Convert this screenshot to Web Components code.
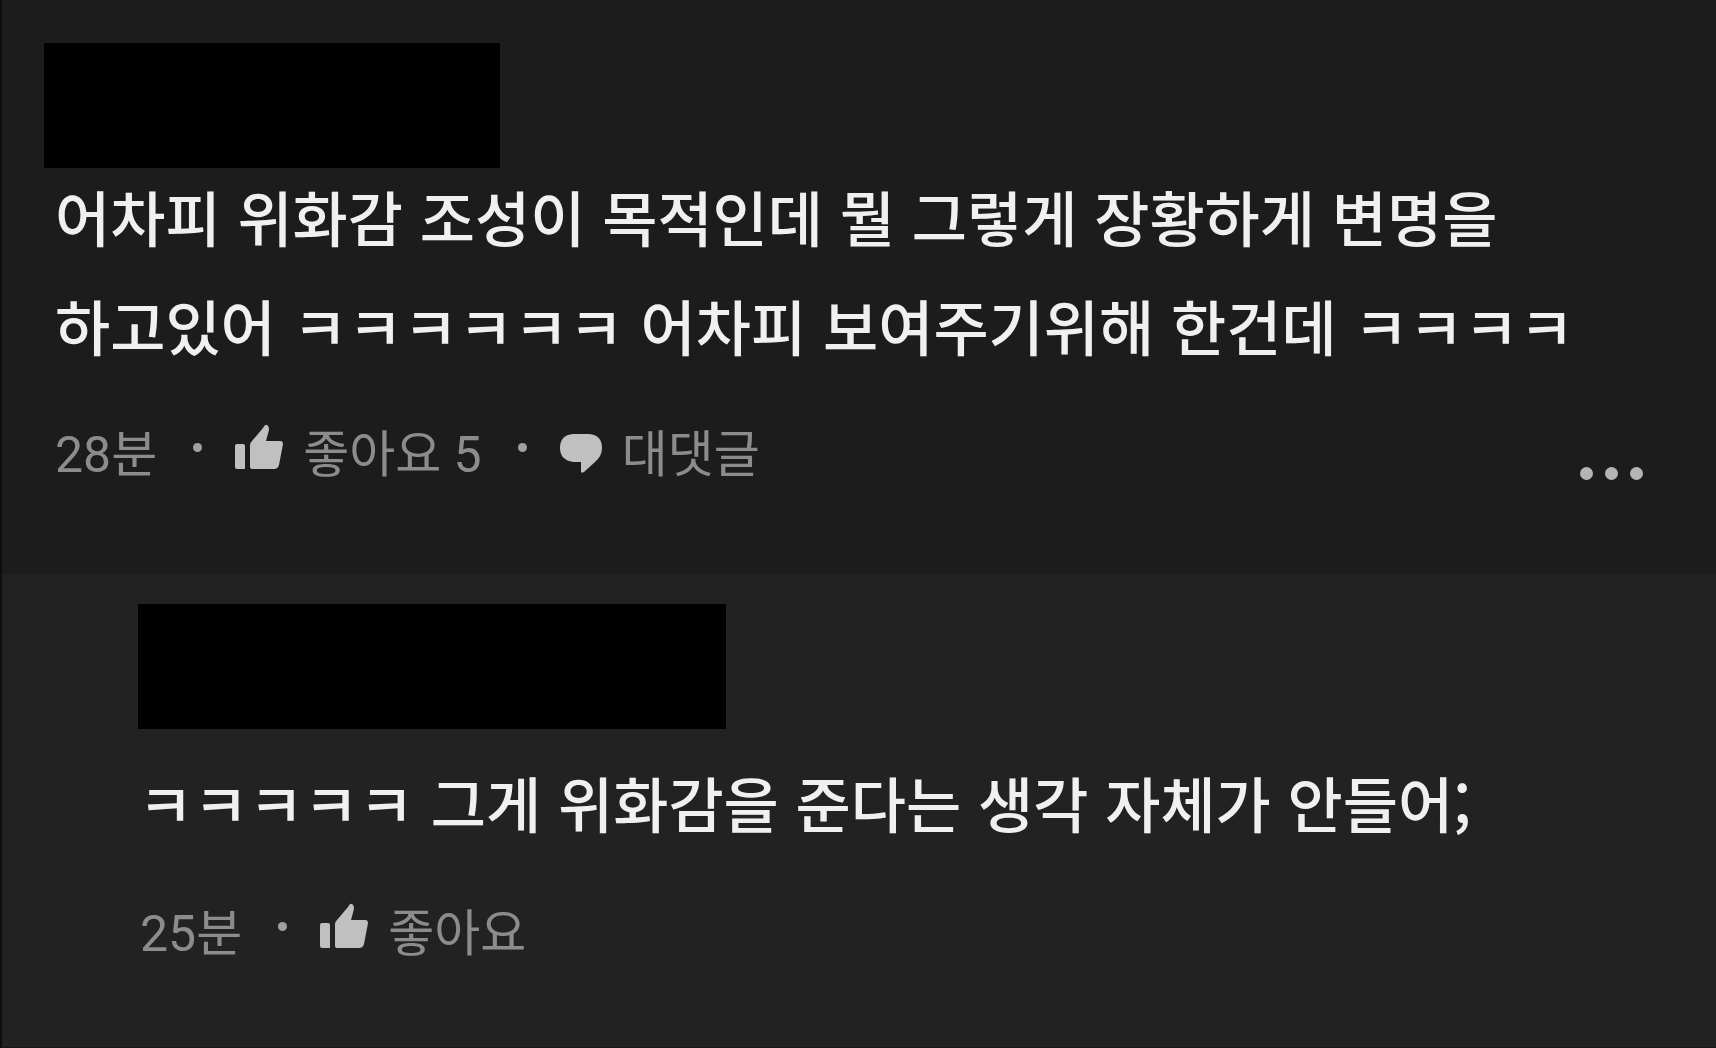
<!DOCTYPE html>
<html lang="ko">
<head>
<meta charset="UTF-8">
<meta name="viewport" content="width=device-width, initial-scale=1">
<title>댓글</title>
<style>
    body{
        background: #222222;
        box-sizing: border-box;
        font-family: Roboto, "Noto Sans CJK KR", sans-serif;
        margin: 0;
        min-height: 100vh;
    }
</style>
</head>
<body>
    <comment-list>
        <comment-item>
            <hidden-name slot="author" size="456"></hidden-name>
            어차피 위화감 조성이 목적인데 뭘 그렇게 장황하게 변명을 하고있어 ㅋㅋㅋㅋㅋㅋ 어차피 보여주기위해 한건데 ㅋㅋㅋㅋ
            <comment-meta slot="meta" time="28분">
                <comment-action icon="like">좋아요 5</comment-action>
                <comment-action icon="reply">대댓글</comment-action>
            </comment-meta>
            <more-button slot="more"></more-button>
        </comment-item>
        <comment-item reply>
            <hidden-name slot="author" size="588"></hidden-name>
            ㅋㅋㅋㅋㅋ 그게 위화감을 준다는 생각 자체가 안들어;
            <comment-meta slot="meta" time="25분">
                <comment-action icon="like">좋아요</comment-action>
            </comment-meta>
        </comment-item>
    </comment-list>

<script>
const ICONS = {
    like: `
        <svg width="50" height="50" viewBox="0 0 50 50" aria-hidden="true">
            <path d="M3 20H9Q11 20 11 22V45H3Q1 45 1 43V22Q1 20 3 20Z"/>
            <path d="M16 21Q16 19 18 17L29 4Q31 0 33 1Q35 2 35 6L32 17H46Q49 17 49 20L45 41Q44 45 40 45H18Q16 45 16 43Z"/>
        </svg>`,
    reply: `
        <svg width="44" height="50" viewBox="0 0 44 50" aria-hidden="true">
            <path d="M14 10H30Q43 11 43 24Q43 32 36 38L25 48Q22 50 22 47V38H14Q1 36 1 24Q1 11 14 10Z"/>
        </svg>`
};

class CommentList extends HTMLElement
{
    constructor()
    {
        super();
        this.attachShadow({mode: "open"});
    }

    connectedCallback()
    {
        this.shadowRoot.innerHTML = `
        <style>
            :host{
                border-bottom: 1px solid #1a171a;
                border-left: 2px solid #0d0d0d;
                box-sizing: border-box;
                display: flex;
                flex-direction: column;
                min-height: 100vh;
            }
        </style>
        <slot></slot>
        `;
    }
}

class CommentItem extends HTMLElement
{
    constructor()
    {
        super();
        this.attachShadow({mode: "open"});
    }

    connectedCallback()
    {
        this.shadowRoot.innerHTML = `
        <style>
            :host{
                background: #1c1c1c;
                display: block;
                padding: 43px 64px 88px 42px;
            }

            :host([reply]){
                background: #222222;
                flex-grow: 1;
                padding: 30px 64px 64px 136px;
            }

            p{
                color: #f0f0f0;
                font-family: "Noto Sans CJK KR", sans-serif;
                font-size: 60px;
                font-weight: 500;
                line-height: 109px;
                margin: -7px 0 0 11px;
                word-break: keep-all;
            }

            :host([reply]) p{
                margin: 18px 0 0 0;
            }

            footer{
                align-items: flex-end;
                display: flex;
                justify-content: space-between;
                margin: 45px 0 0 11px;
            }

            :host([reply]) footer{
                margin: 47px 0 0 2px;
            }
        </style>
        <article>
            <slot name="author"></slot>
            <p><slot></slot></p>
            <footer>
                <slot name="meta"></slot>
                <slot name="more"></slot>
            </footer>
        </article>
        `;
    }
}

class HiddenName extends HTMLElement
{
    constructor()
    {
        super();
        this.attachShadow({mode: "open"});
    }

    connectedCallback()
    {
        this.shadowRoot.innerHTML = `
        <style>
            :host{
                background: #000000;
                display: block;
                height: 125px;
                max-width: 100%;
                width: ${this.getAttribute("size")}px;
            }
        </style>
        `;
    }
}

class CommentMeta extends HTMLElement
{
    constructor()
    {
        super();
        this.attachShadow({mode: "open"});
    }

    connectedCallback()
    {
        this.shadowRoot.innerHTML = `
        <style>
            :host{
                align-items: center;
                color: #8c8c8c;
                display: flex;
                font-size: 50px;
                font-weight: 400;
                line-height: 60px;
            }
        </style>
        <time>${this.getAttribute("time")}</time>
        <slot></slot>
        `;
    }
}

class CommentAction extends HTMLElement
{
    constructor()
    {
        super();
        this.attachShadow({mode: "open"});
    }

    connectedCallback()
    {
        this.shadowRoot.innerHTML = `
        <style>
            :host{
                align-items: center;
                display: flex;
            }

            /* separator dot before every action */
            :host::before{
                background: #a0a0a0;
                border-radius: 50%;
                content: "";
                height: 9px;
                margin: 0 32px 16px 36px;
                width: 9px;
            }

            button{
                align-items: center;
                background: none;
                border: 0;
                color: inherit;
                cursor: pointer;
                display: flex;
                font: inherit;
                gap: 19px;
                padding: 0;
            }

            svg{
                fill: #c0c0c0;
                margin-bottom: 12px;
            }
        </style>
        <button type="button">
            ${ICONS[this.getAttribute("icon")]}
            <span><slot></slot></span>
        </button>
        `;
    }
}

class MoreButton extends HTMLElement
{
    constructor()
    {
        super();
        this.attachShadow({mode: "open"});
    }

    connectedCallback()
    {
        this.shadowRoot.innerHTML = `
        <style>
            :host{
                display: block;
            }

            button{
                background: none;
                border: 0;
                cursor: pointer;
                display: flex;
                gap: 12px;
                padding: 0 9px 6px 0;
            }

            i{
                background: #b4b4b4;
                border-radius: 50%;
                height: 13px;
                width: 13px;
            }
        </style>
        <button type="button" aria-label="더보기"><i></i><i></i><i></i></button>
        `;
    }
}

customElements.define("comment-list", CommentList);
customElements.define("comment-item", CommentItem);
customElements.define("hidden-name", HiddenName);
customElements.define("comment-meta", CommentMeta);
customElements.define("comment-action", CommentAction);
customElements.define("more-button", MoreButton);
</script>
</body>
</html>
